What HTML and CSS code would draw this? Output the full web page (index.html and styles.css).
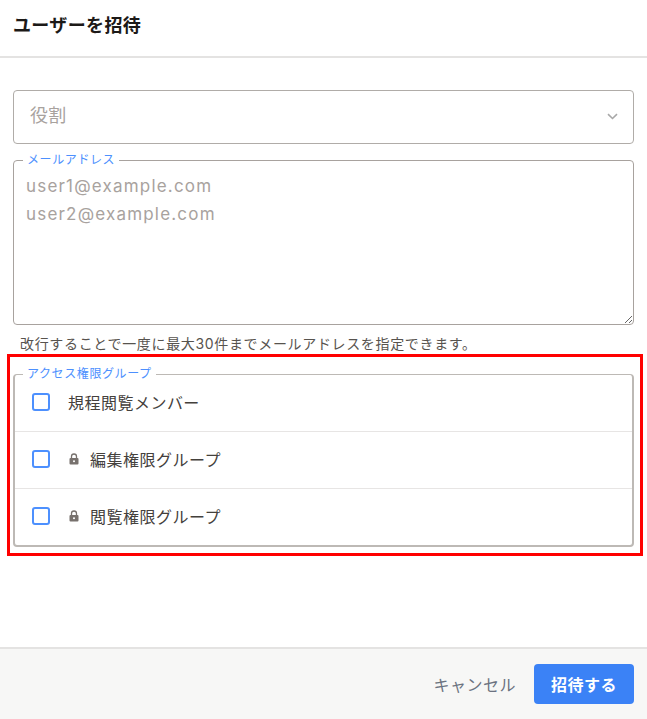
FILE: index.html
```html
<!DOCTYPE html>
<html lang="ja">
<head>
<meta charset="utf-8">
<title>ユーザーを招待</title>
<link rel="stylesheet" href="styles.css">
</head>
<body>
<div class="dialog">
  <header class="dialog-header"><h1>ユーザーを招待</h1></header>
  <main class="dialog-body">
    <div class="select">
      <span>役割</span>
      <svg class="chevron" width="11" height="7" viewBox="0 0 11 7" aria-hidden="true"><path d="M1 1.200 5.500 5.500 10 1.200" fill="none" stroke="#a8a8a8" stroke-width="1.600"/></svg>
    </div>
    <fieldset class="field email">
      <legend>メールアドレス</legend>
      <div class="emails">
        <div>user1@example.com</div>
        <div>user2@example.com</div>
      </div>
    </fieldset>
    <p class="hint">改行することで一度に最大30件までメールアドレスを指定できます。</p>
    <div class="highlight">
      <fieldset class="field groups">
        <legend>アクセス権限グループ</legend>
        <label class="row"><span class="check"></span><span class="name">規程閲覧メンバー</span></label>
        <label class="row"><span class="check"></span>
          <svg class="lock" width="10" height="12" viewBox="0 0 10 12" aria-hidden="true"><path d="M2.500 5V3.500a2.500 2.500 0 0 1 5 0V5" fill="none" stroke="#77716d" stroke-width="1.300"/><rect x="0.500" y="5" width="9" height="6.500" rx="1" fill="#77716d"/><circle cx="5" cy="8.200" r="1" fill="#fff"/></svg>
          <span class="name">編集権限グループ</span></label>
        <label class="row"><span class="check"></span>
          <svg class="lock" width="10" height="12" viewBox="0 0 10 12" aria-hidden="true"><path d="M2.500 5V3.500a2.500 2.500 0 0 1 5 0V5" fill="none" stroke="#77716d" stroke-width="1.300"/><rect x="0.500" y="5" width="9" height="6.500" rx="1" fill="#77716d"/><circle cx="5" cy="8.200" r="1" fill="#fff"/></svg>
          <span class="name">閲覧権限グループ</span></label>
      </fieldset>
    </div>
  </main>
  <footer class="dialog-footer">
    <button class="btn-cancel" type="button">キャンセル</button>
    <button class="btn-primary" type="button">招待する</button>
  </footer>
</div>
</body>
</html>
```
FILE: styles.css
```css
* { box-sizing: border-box; }
html, body { margin: 0; height: 100%; }
body {
  background: #fff;
  font-family: Inter, "Noto Sans CJK JP", sans-serif;
  color: #292524;
}
.dialog { width: 647px; height: 719px; display: flex; flex-direction: column; }
.dialog-header {
  height: 58px;
  padding: 14px 13px 0;
  border-bottom: 2px solid #e4e3e2;
}
.dialog-header h1 { margin: 0; font-size: 18px; line-height: 24px; font-weight: 700; letter-spacing: 0.02em; color: #1c1917; }
.dialog-body { flex: 1; padding: 32px 13px 0; min-height: 0; }
.select {
  height: 54px;
  border: 1px solid #b0aca8;
  border-radius: 4px;
  padding: 0 15px 7px 16px;
  display: flex;
  align-items: center;
  justify-content: space-between;
  font-size: 18px;
  letter-spacing: 0.02em;
  color: #a8a29e;
}
.chevron { display: block; position: relative; top: 3px; }
.field {
  margin: 0;
  border: 1px solid #a8a29e;
  border-radius: 4px;
  padding: 0;
  min-width: 0;
}
.field legend {
  margin-left: 9px;
  padding: 0 4px;
  font-size: 12px;
  line-height: 14px;
  color: #4d90fe;
  letter-spacing: 0.05em;
}
.email { margin-top: 9px; height: 172px; }
.emails {
  height: 157px;
  padding: 5px 12px;
  overflow: auto;
  resize: vertical;
  font-size: 17px;
  line-height: 28px;
  letter-spacing: 0.07em;
  color: #a8a29e;
}
.hint {
  margin: 9px 0 0;
  padding-left: 7px;
  font-size: 14px;
  line-height: 20px;
  letter-spacing: 0.047em;
  color: #57534e;
  white-space: nowrap;
}
.highlight {
  margin: 0 -9px 0 -6px;
  height: 202px;
  padding: 10px 6px 0 3px;
  border: 3px solid #f00;
}
.groups { height: 180px; border-color: #bdb9b5; border-width: 1px 2px 2px; }
.groups legend { margin-left: 8px; }
.row {
  display: flex;
  align-items: center;
  height: 57px;
  padding: 0 0 2px 17px;
  border-bottom: 1px solid #e7e5e4;
  font-size: 16px;
  color: #44403c;
  letter-spacing: 0.03em;
}
.row:first-of-type { height: 51px; padding-bottom: 9px; }
.row:last-child { border-bottom: 0; height: 56px; }
.check {
  width: 18px;
  height: 18px;
  flex: none;
  border: 2px solid #4d90fe;
  border-radius: 3px;
  background: #fff;
  margin-right: 18px;
}
.lock { flex: none; margin: 0 11px 0 1px; }
.dialog-footer {
  height: 72px;
  flex: none;
  background: #f7f7f6;
  border-top: 2px solid #e4e3e2;
  display: flex;
  justify-content: flex-end;
  align-items: center;
  padding: 0 13px 0 0;
  gap: 18px;
}
.btn-cancel {
  background: none;
  border: 0;
  padding: 0;
  font: inherit;
  font-size: 16px;
  letter-spacing: 0.03em;
  color: #6b7280;
}
.btn-primary {
  width: 100px;
  height: 40px;
  border: 0;
  border-radius: 4px;
  background: #3b82f6;
  color: #fff;
  font: inherit;
  font-size: 16px;
  font-weight: 700;
  letter-spacing: 0.03em;
}
```
